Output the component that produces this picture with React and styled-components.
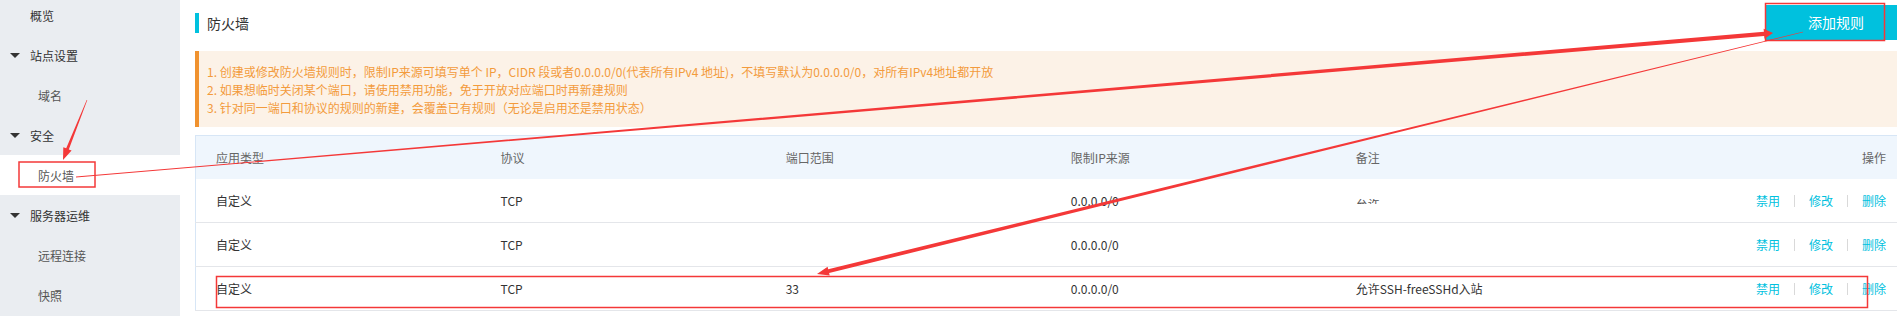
import React from 'react'
import styled, { createGlobalStyle } from 'styled-components'

const GlobalStyle = createGlobalStyle`
  html, body {
    margin: 0;
    padding: 0;
    overflow: hidden;
    background: #fff;
  }
  body {
    font-family: "Noto Sans CJK SC", "Liberation Sans", sans-serif;
    font-size: 12px;
    color: #333;
  }
`

const menu = [
  { label: '概览', kind: 'top' },
  { label: '站点设置', kind: 'group' },
  { label: '域名', kind: 'child' },
  { label: '安全', kind: 'group' },
  { label: '防火墙', kind: 'child', active: true },
  { label: '服务器运维', kind: 'group' },
  { label: '远程连接', kind: 'child' },
  { label: '快照', kind: 'child' }
]

const rules = [
  { type: '自定义', proto: 'TCP', port: '', ip: '0.0.0.0/0', note: '允许', cut: true },
  { type: '自定义', proto: 'TCP', port: '', ip: '0.0.0.0/0', note: '' },
  { type: '自定义', proto: 'TCP', port: '33', ip: '0.0.0.0/0', note: '允许SSH-freeSSHd入站' }
]

const tips = [
  '1. 创建或修改防火墙规则时，限制IP来源可填写单个 IP，CIDR 段或者0.0.0.0/0(代表所有IPv4 地址)，不填写默认为0.0.0.0/0，对所有IPv4地址都开放',
  '2. 如果想临时关闭某个端口，请使用禁用功能，免于开放对应端口时再新建规则',
  '3. 针对同一端口和协议的规则的新建，会覆盖已有规则（无论是启用还是禁用状态）'
]

// tapered arrow: thin at the start, thick near the head
function arrowPoints (sx, sy, tx, ty, sw, ew, hl, hw) {
  const len = Math.hypot(tx - sx, ty - sy)
  const ux = (tx - sx) / len
  const uy = (ty - sy) / len
  const nx = -uy
  const ny = ux
  const bx = tx - ux * hl
  const by = ty - uy * hl
  const p = [
    [sx + nx * sw / 2, sy + ny * sw / 2],
    [bx + nx * ew / 2, by + ny * ew / 2],
    [bx + nx * hw / 2, by + ny * hw / 2],
    [tx, ty],
    [bx - nx * hw / 2, by - ny * hw / 2],
    [bx - nx * ew / 2, by - ny * ew / 2],
    [sx - nx * sw / 2, sy - ny * sw / 2]
  ]
  return p.map(([x, y]) => `${x.toFixed(1)},${y.toFixed(1)}`).join(' ')
}

export default function App () {
  return (
    <Page>
      <GlobalStyle />
      <Sidebar>
        <Menu>
          {menu.map((item) => (
            <MenuItem key={item.label} kind={item.kind} active={item.active}>
              {item.kind === 'group' && <Caret />}
              {item.label}
            </MenuItem>
          ))}
        </Menu>
      </Sidebar>

      <Main>
        <Header>
          <Title>防火墙</Title>
          <AddButton>添加规则</AddButton>
        </Header>

        <Notice>
          {tips.map((t) => <div key={t}>{t}</div>)}
        </Notice>

        <Table>
          <thead>
            <tr>
              <Th>应用类型</Th>
              <Th>协议</Th>
              <Th>端口范围</Th>
              <Th>限制IP来源</Th>
              <Th>备注</Th>
              <Th right>操作</Th>
            </tr>
          </thead>
          <tbody>
            {rules.map((r, i) => (
              <tr key={i}>
                <Td>{r.type}</Td>
                <Td>{r.proto}</Td>
                <Td>{r.port}</Td>
                <Td>{r.ip}</Td>
                <Td>{r.cut ? <CutText><span>{r.note}</span></CutText> : r.note}</Td>
                <Td right>
                  <ActionLink>禁用</ActionLink>
                  <Sep />
                  <ActionLink>修改</ActionLink>
                  <Sep />
                  <ActionLink>删除</ActionLink>
                </Td>
              </tr>
            ))}
          </tbody>
        </Table>
      </Main>

      <Marks viewBox='0 0 1906 316'>
        <rect x='19' y='162' width='76' height='25' />
        <rect x='1765.5' y='3.5' width='119' height='37' />
        <rect x='216.5' y='276.5' width='1651' height='31' />
        <polygon points={arrowPoints(87, 100, 63, 160, 0.6, 2.8, 12, 9)} />
        <polygon points={arrowPoints(76, 177, 1773, 33, 0.8, 4.2, 9, 10)} />
        <polygon points={arrowPoints(1803, 32, 817, 274, 0.6, 4, 12, 9)} />
      </Marks>
    </Page>
  )
}

const Page = styled.div`
  position: relative;
  display: flex;
  width: 1906px;
  height: 316px;
  overflow: hidden;
`

const Sidebar = styled.div`
  flex: 0 0 180px;
  background: #eaedf1;
`

const Menu = styled.div`
  margin-top: -5px;
`

const MenuItem = styled.div`
  display: flex;
  align-items: center;
  height: 40px;
  padding-left: ${p => p.kind === 'child' ? '38px' : p.kind === 'group' ? '10px' : '30px'};
  background: ${p => p.active ? '#fff' : 'transparent'};
  color: ${p => p.kind === 'child' ? '#555' : '#333'};
  font-size: 12px;
`

const Caret = styled.span`
  width: 0;
  height: 0;
  margin-right: 10px;
  border-left: 5px solid transparent;
  border-right: 5px solid transparent;
  border-top: 5px solid #333;
`

const Main = styled.div`
  flex: 1;
  padding-left: 15px;
  display: flex;
  flex-direction: column;
`

const Header = styled.div`
  display: flex;
  justify-content: space-between;
  align-items: flex-start;
  flex: 0 0 51px;
  height: 51px;
  padding-top: 5px;
  box-sizing: border-box;
`

const Title = styled.div`
  margin-top: 8px;
  height: 20px;
  line-height: 20px;
  border-left: 4px solid #00c1de;
  padding-left: 8px;
  font-size: 14px;
  color: #333;
`

const AddButton = styled.div`
  width: 140px;
  height: 35px;
  line-height: 35px;
  text-align: center;
  background: #00c1de;
  color: #fff;
  font-size: 14px;
`

const Notice = styled.div`
  flex: 0 0 76px;
  height: 76px;
  box-sizing: border-box;
  padding: 12px 0 10px 8px;
  border-left: 4px solid #f0922f;
  background: #fcf2e7;
  color: #f39b3c;
  font-size: 12px;
  line-height: 18px;
  white-space: nowrap;
`

const Table = styled.table`
  margin-top: 8px;
  width: 100%;
  border-collapse: collapse;
  table-layout: fixed;
  border-left: 1px solid #d7e6f6;
  border-top: 1px solid #d7e6f6;
  font-size: 12px;
`

const Th = styled.th`
  height: 43px;
  padding: 0 20px;
  background: #eff6fd;
  color: #666;
  font-weight: normal;
  text-align: ${p => p.right ? 'right' : 'left'};
`

const Td = styled.td`
  height: 43px;
  padding: 0 20px;
  color: #333;
  border-bottom: 1px solid #e4e6ea;
  text-align: ${p => p.right ? 'right' : 'left'};
  white-space: nowrap;
`

const CutText = styled.span`
  display: inline-block;
  height: 5px;
  overflow: hidden;
  vertical-align: 2px;
  color: #555;

  span {
    display: block;
    line-height: 12px;
    margin-top: -1px;
  }
`

const ActionLink = styled.span`
  color: #00c1de;
`

const Sep = styled.span`
  display: inline-block;
  width: 1px;
  height: 12px;
  margin: 0 14px;
  background: #d9d9d9;
  vertical-align: -1px;
`

const Marks = styled.svg`
  position: absolute;
  top: 0;
  left: 0;
  width: 1906px;
  height: 316px;
  pointer-events: none;

  rect {
    fill: none;
    stroke: #f43838;
    stroke-width: 1.5;
  }

  polygon {
    fill: #f43838;
  }
`
